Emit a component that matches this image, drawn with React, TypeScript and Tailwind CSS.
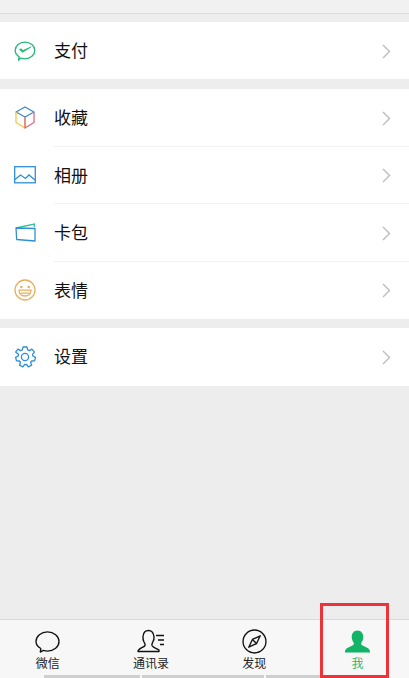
import React from 'react';

const Chevron = () => (
  <svg width="9" height="15" viewBox="0 0 9 15" fill="none" className="ml-auto mr-[18px] mt-[1px]">
    <path d="M1 1l6.500 6.500L1 14" stroke="#bcbcbc" strokeWidth="1.400" />
  </svg>
);

const PayIcon = () => (
  <svg width="22" height="20" viewBox="0 0 24 22" fill="none">
    <path d="M5.500 17.200C2.800 15.500 1.200 13.200 1.200 10.400 1.200 5.400 6 1.200 12 1.200s10.800 4.200 10.800 9.200-4.800 9.200-10.800 9.200c-1.700 0-3.200-.3-4.600-.9L5 20.800z" stroke="#22b573" strokeWidth="1.400" />
    <path d="M6 9.500l3.500 3L18.500 6.500 9.800 10.500 7.500 8.500z" fill="#22b573" stroke="#22b573" strokeWidth=".8" strokeLinejoin="round" />
  </svg>
);

const CubeIcon = () => (
  <svg width="20" height="23" viewBox="0 0 20 23" fill="none" strokeWidth="1.300">
    <path d="M1 6 10 1l9 5-9 5z" stroke="#3f86c9" strokeLinejoin="round" />
    <path d="M1 6v10.500L10 22V11" stroke="#f0c947" strokeLinejoin="round" />
    <path d="M19 6v10.500L10 22V11" stroke="#e0697a" strokeLinejoin="round" />
  </svg>
);

const PhotoIcon = () => (
  <svg width="22" height="18" viewBox="0 0 22 18" fill="none" stroke="#2f8fd6" strokeWidth="1.300">
    <rect x=".7" y=".7" width="20.600" height="16.100" />
    <path d="M1 13.500 6.500 9l5 3.500 3.500-3.500 6 5" />
  </svg>
);

const CardIcon = () => (
  <svg width="21" height="19" viewBox="0 0 21 19" fill="none" strokeWidth="1.300">
    <path d="M1 5 19.300 1v3" stroke="#2fc0a0" />
    <path d="M1 5l19 .5V18L1.700 16.500z" stroke="#2f8fd6" strokeLinejoin="round" />
  </svg>
);

const SmileIcon = () => (
  <svg width="22" height="22" viewBox="0 0 22 22" fill="none" stroke="#e8ae62" strokeWidth="1.300">
    <circle cx="11" cy="11" r="10" />
    <circle cx="7.300" cy="8" r="1.300" fill="#e8ae62" stroke="none" />
    <circle cx="14.700" cy="8" r="1.300" fill="#e8ae62" stroke="none" />
    <path d="M5 11.200h12c0 3.500-2.600 5.800-6 5.800s-6-2.300-6-5.800zM6.500 14.200h9" />
  </svg>
);

const GearIcon = () => (
  <svg width="22" height="22" viewBox="0 0 22 22" fill="none" stroke="#2f8fd6" strokeWidth="1.300" strokeLinejoin="round">
    <path d="M9 1h4l.7 2.900 1.700.7 2.600-1.500 2.400 3-1.900 2.200.4 1.700 2.600 1.300-.9 3.600-2.900.1-1.100 1.500 1.100 2.700-3.400 1.600-1.800-2.300h-1.800l-1.900 2.300-3.400-1.600 1.100-2.700-1.100-1.500-2.900-.1-.9-3.600 2.600-1.300.4-1.700L1.600 6.100l2.400-3 2.600 1.500 1.700-.7z" />
    <circle cx="11" cy="11" r="3.600" />
  </svg>
);

const Row = ({ icon, label, divider }: { icon: React.ReactNode; label: string; divider?: boolean }) => (
  <div className="relative flex h-[57.5px] items-center bg-white">
    <div className="flex w-[54px] shrink-0 justify-center pr-[4px]">{icon}</div>
    <span className="pt-[2px] text-[17px] text-[#111]">{label}</span>
    <Chevron />
    {divider && <div className="absolute bottom-0 left-[54px] right-0 h-px bg-[#f1f1f1]" />}
  </div>
);

const Tab = ({ icon, label, active }: { icon: React.ReactNode; label: string; active?: boolean }) => (
  <div className="flex w-[103.3px] shrink-0 flex-col items-center pt-[8px]">
    <div className="flex h-[26px] items-center justify-center">{icon}</div>
    <span className={`mt-[3px] text-[12px] leading-[14px] ${active ? 'text-[#2fb573]' : 'text-[#222]'}`}>{label}</span>
  </div>
);

export default function App() {
  return (
    <div
      className="relative flex h-[678px] w-[409px] flex-col overflow-hidden bg-[#ededed]"
      style={{ fontFamily: '"Liberation Sans", "Noto Sans CJK SC", sans-serif' }}
    >
      <div className="box-content h-[13px] border-b border-[#dcdcdc] bg-[#f1f1f1]" />
      <div className="mt-[8px] flex h-[57px] flex-col justify-center bg-white">
        <Row icon={<PayIcon />} label="支付" />
      </div>
      <div className="mt-[10px] bg-white">
        <Row icon={<CubeIcon />} label="收藏" divider />
        <Row icon={<PhotoIcon />} label="相册" divider />
        <Row icon={<CardIcon />} label="卡包" divider />
        <Row icon={<SmileIcon />} label="表情" />
      </div>
      <div className="mt-[9px]">
        <Row icon={<GearIcon />} label="设置" />
      </div>

      <div className="mt-auto flex h-[59px] border-t border-[#d9d9d9] bg-[#f7f7f7]">
        <div className="-ml-[4px] flex">
          <Tab
            label="微信"
            icon={
              <svg width="25" height="23" viewBox="0 0 26 24" fill="none" stroke="#111" strokeWidth="1.400">
                <path d="M6 19.300C2.800 17.500 1 15 1 12c0-5.500 5.400-10 12-10s12 4.500 12 10-5.400 10-12 10c-1.600 0-3-.3-4.400-.7L5.500 23z" strokeLinejoin="round" />
              </svg>
            }
          />
          <Tab
            label="通讯录"
            icon={
              <svg width="28" height="24" viewBox="0 0 28 24" fill="none" stroke="#111" strokeWidth="1.400">
                <path d="M1 22.500c0-3 5.500-3.800 7-6 .5-1.200-.3-2.200-1-3.500-1-2-1.200-3.500-1-5.500C6.300 4 8.500 1.500 11.500 1.500s5 2.500 5.500 6c.2 2-.3 4-1.200 5.500-.7 1.300-1.300 2.200-.8 3.500 1 2.200 5 3 7 4.500v1.500z" strokeLinejoin="round" />
                <path d="M19 6.500h8M21 11h6M23 15.500h4" />
              </svg>
            }
          />
          <Tab
            label="发现"
            icon={
              <svg width="25" height="25" viewBox="0 0 24 24" fill="none" stroke="#111" strokeWidth="1.300">
                <circle cx="12" cy="12" r="11" />
                <path d="M17.500 6.500 14 14l-7.500 3.500L10 10z" strokeLinejoin="round" />
                <path d="M10 10l4 4" />
              </svg>
            }
          />
          <Tab
            label="我"
            active
            icon={
              <svg width="25" height="23" viewBox="0 0 26 23" fill="#12b567">
                <path d="M13 0c3.800 0 6 3 6 6.800 0 2.400-1 4.400-2 6-.6 1.500.2 2.500 1.800 3.200 2.600 1.200 6.200 2.400 7.200 5.500V23H0v-1.500c1-3.100 4.600-4.300 7.200-5.500 1.600-.7 2.400-1.700 1.800-3.200-1-1.600-2-3.600-2-6C7 3 9.200 0 13 0z" />
              </svg>
            }
          />
        </div>
      </div>

      {/* home indicator pieces along the bottom edge */}
      <div className="absolute bottom-0 left-[44px] right-[20px] flex h-[3px] gap-[2px]">
        <div className="w-[96px] bg-[#cfcfcf]" />
        <div className="w-[122px] bg-[#cfcfcf]" />
        <div className="flex-1 bg-[#cfcfcf]" />
      </div>

      <div className="absolute left-[320px] top-[603px] h-[75px] w-[69px] border-[3px] border-[#ee3338]" />
    </div>
  );
}
